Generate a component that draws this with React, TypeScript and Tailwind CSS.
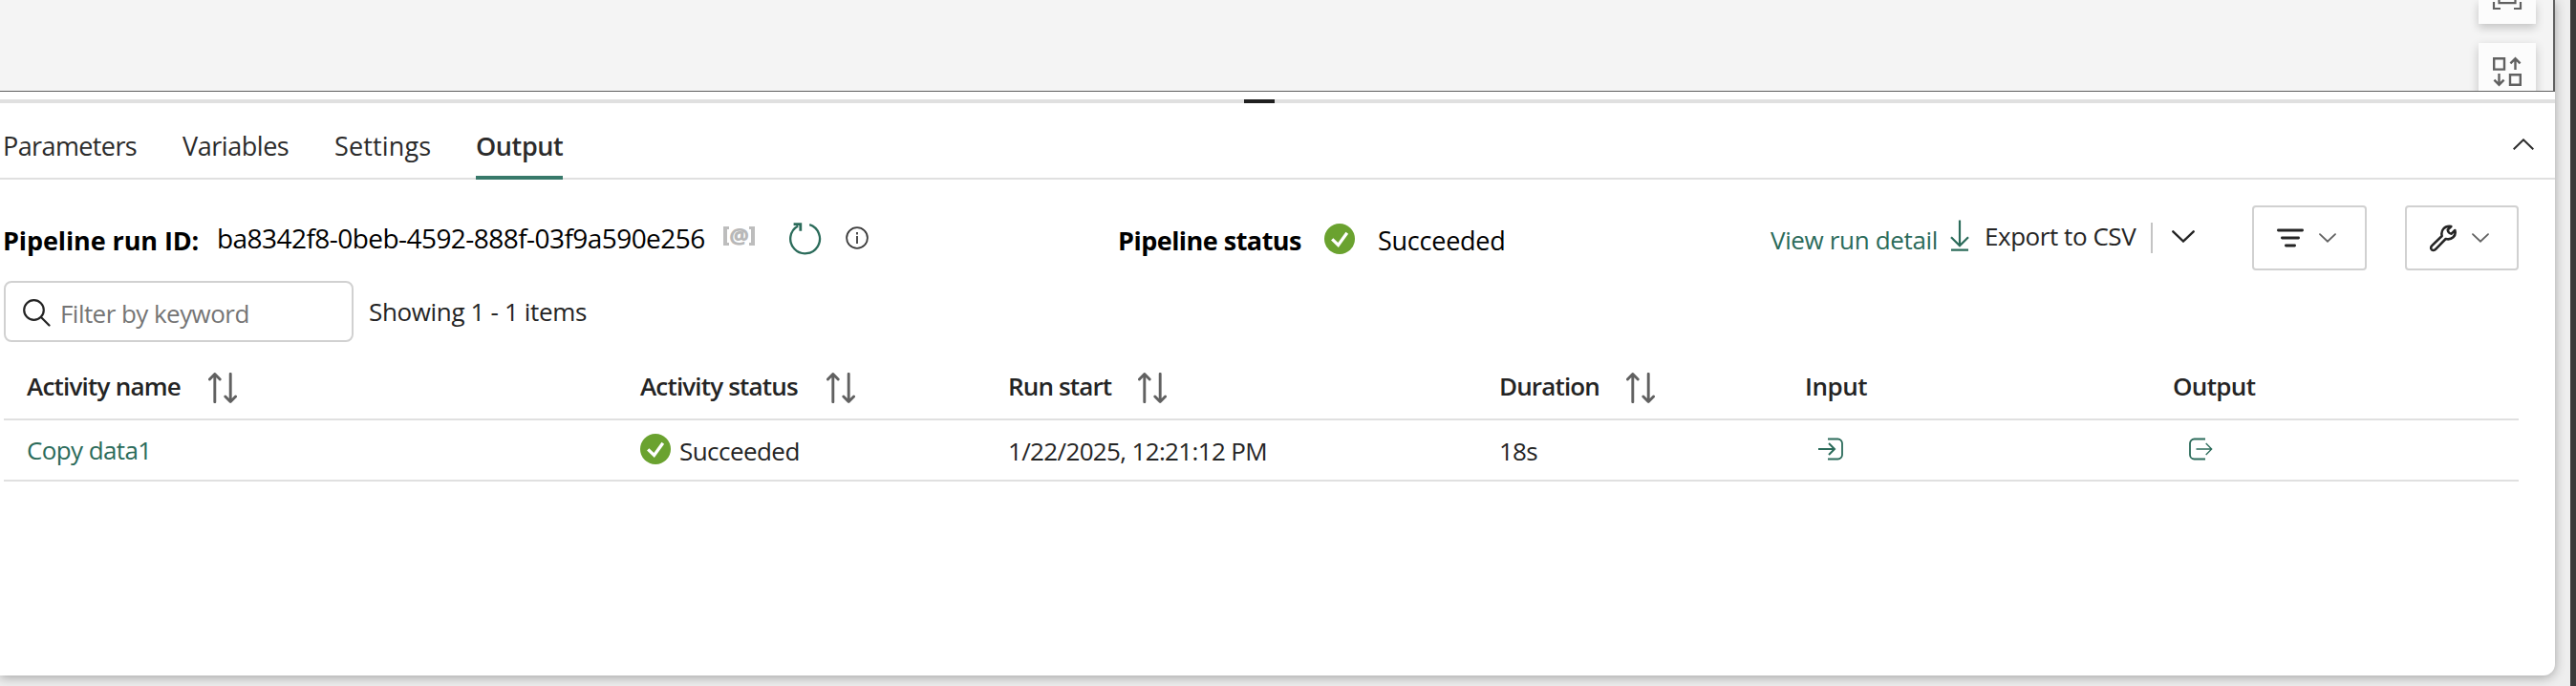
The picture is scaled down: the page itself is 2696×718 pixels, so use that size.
import type { ReactNode } from "react";

function ChevronDown({ className, strokeWidth = 2 }: { className: string; strokeWidth?: number }) {
  return (
    <svg viewBox="0 0 24 13" className={className} fill="none" stroke="currentColor" strokeWidth={strokeWidth} strokeLinecap="round" strokeLinejoin="miter">
      <path d="M1.3 1.3 12 11.5 22.7 1.3" />
    </svg>
  );
}

function SortIcon() {
  return (
    <svg viewBox="0 0 30 32" className="mt-4 h-8 w-[30px] shrink-0" fill="none" stroke="#616161" strokeWidth="2.9" strokeLinecap="round" strokeLinejoin="round">
      <path d="M6.8 30.7V1.6M1.4 7 6.8 1.5 12.2 7" />
      <path d="M23.2 1.3v29.1M17.8 25l5.4 5.5 5.4-5.5" />
    </svg>
  );
}

function SuccessIcon() {
  return (
    <svg viewBox="0 0 32 32" className="h-8 w-8 shrink-0">
      <circle cx="16" cy="16" r="16" fill="#6aa22f" />
      <path d="M8.2 16.4 14.6 22.4 23.8 9.8" fill="none" stroke="#fff" strokeWidth="3.3" />
    </svg>
  );
}

function CanvasTools() {
  return (
    <div className="flex w-[60px] shrink-0 flex-col gap-5">
      <div className="h-[25px] w-[60px] bg-[#fcfcfc] shadow-[0_4px_10px_rgba(0,0,0,0.2)]">
        <svg viewBox="0 0 60 25" className="h-[25px] w-[60px]" fill="none" stroke="#616161" strokeWidth="2.2">
          <path d="M16 2v7h7M44 2v7h-7M21.5 0v3.2h17V0" />
        </svg>
      </div>
      <div className="h-[60px] w-[60px] shrink-0 bg-[#fcfcfc] shadow-[0_4px_10px_rgba(0,0,0,0.2)]">
        <svg viewBox="0 0 60 60" className="h-[60px] w-[60px]" fill="none" stroke="#616161" strokeWidth="2.4">
          <path d="M16.2 16.2h10.8v11.4H16.2zM33 33.2h10.8v10.6H33z" />
          <path d="M38.5 28V16.5M33.4 21.4l5.1-5.1 5.1 5.1M21.5 32v11.6M16.4 38.6l5.1 5.1 5.1-5.1" />
        </svg>
      </div>
    </div>
  );
}

function Tab({ className, children }: { className: string; children: ReactNode }) {
  return <div className={`h-[80px] shrink-0 pt-[29px] text-[27px] leading-8 text-[#2b2b2b] ${className}`}>{children}</div>;
}

function HeaderCell({ label, labelClass, sortable }: { label: string; labelClass: string; sortable?: boolean }) {
  return (
    <div className="flex pl-6">
      <span className={`shrink-0 pt-[14px] text-[26px] leading-8 font-semibold text-[#242424] ${labelClass}`}>{label}</span>
      {sortable && <SortIcon />}
    </div>
  );
}

const columns = "grid grid-cols-[642px_385px_514px_320px_385px_386px]";

export default function App() {
  return (
    <div className="flex h-[718px] w-[2696px] overflow-hidden bg-[#eeeeee] whitespace-nowrap [font-family:'Open_Sans','Noto_Sans',sans-serif]">
      <div className="h-[707px] w-[2674px] shrink-0 overflow-hidden rounded-br-[12px] bg-white shadow-[0_2px_12px_rgba(0,0,0,0.32)]">
        <div className="flex h-[96px] justify-end overflow-hidden border-r-2 border-b border-[#616161] bg-[#f4f4f4] pr-[18px]">
          <CanvasTools />
        </div>

        <div className="mt-2 flex h-1 justify-center bg-[#e0e0e0]">
          <div className="mr-[38px] h-1 w-8 bg-[#1f1f1f]" />
        </div>

        <div className="flex h-[80px] border-b-2 border-[#e0e0e0]">
          <Tab className="ml-[3px] w-[188px] tracking-[-0.6px]">Parameters</Tab>
          <Tab className="w-[159px] tracking-[-0.45px]">Variables</Tab>
          <Tab className="w-[148px] tracking-[0.15px]">Settings</Tab>
          <Tab className="w-[91px] border-b-4 border-[#38796a] font-semibold tracking-[-0.4px]">Output</Tab>
          <svg viewBox="0 0 22 12" className="mt-[37px] mr-[22px] ml-auto h-3 w-[22px]" fill="none" stroke="#2b2b2b" strokeWidth="2">
            <path d="M0.7 11.3 11 1.3 21.3 11.3" />
          </svg>
        </div>

        <div className="flex h-[106px] items-start text-black">
          <div className="mt-12 ml-[3px] w-[224px] shrink-0 text-[27px] leading-8 font-bold tracking-[-0.1px]">Pipeline run ID:</div>
          <div className="mt-[45px] w-[530px] shrink-0 text-[28px] leading-8 tracking-[-0.55px]">ba8342f8-0beb-4592-888f-03f9a590e256</div>
          <div className="mt-[49px] flex h-5 w-[33px] shrink-0 items-center justify-between text-[#b8b8b8]">
            <span className="h-5 w-[6px] shrink-0 border-y-[3px] border-l-[4px] border-[#bdbdbd]" />
            <span className="w-[21px] shrink-0 text-center text-[23px] leading-5 font-extrabold [transform:translateY(-1px)]">@</span>
            <span className="h-5 w-[6px] shrink-0 border-y-[3px] border-r-[4px] border-[#bdbdbd]" />
          </div>
          <svg viewBox="0 0 34 34" className="mt-[45px] ml-9 h-[34px] w-[34px] shrink-0" fill="none" stroke="#2b6b5a" strokeWidth="2.3">
            <path d="M21.2 2.2A15.4 15.4 0 1 1 9.2 3.4" />
            <path d="M4.6 1.6h7.2v7.2" strokeWidth="2.8" />
          </svg>
          <svg viewBox="0 0 24 24" className="mt-[49px] ml-[25px] h-6 w-6 shrink-0" fill="none" stroke="#3b3b3b" strokeWidth="1.8">
            <circle cx="12" cy="12" r="10.9" />
            <path d="M12 10v8M12 6v2.4" />
          </svg>
          <div className="mt-12 ml-[261px] w-[216px] shrink-0 text-[27px] leading-8 font-bold tracking-[-0.52px]">Pipeline status</div>
          <div className="mt-[46px]"><SuccessIcon /></div>
          <div className="mt-12 ml-6 w-[411px] shrink-0 text-[27px] leading-8 tracking-[-0.25px]">Succeeded</div>
          <div className="mt-[47px] w-[188px] shrink-0 text-[26px] leading-8 tracking-[-0.35px] text-[#2b6b5a]">View run detail</div>
          <svg viewBox="0 0 20 33" className="mt-[42px] h-[33px] w-5 shrink-0" fill="none" stroke="#2b6b5a" strokeWidth="2.2">
            <path d="M10 .5v27M1 18.2l9 9 9-9M1 31.7h18" />
          </svg>
          <div className="mt-[43px] ml-[16px] w-[174px] shrink-0 text-[26px] leading-8 tracking-[-0.45px] text-[#242424]">Export to CSV</div>
          <div className="mt-[45px] h-8 w-[2px] shrink-0 bg-[#c4c4c4]" />
          <ChevronDown className="mt-[53px] ml-5 h-[13px] w-6 shrink-0 text-[#242424]" strokeWidth={2.4} />
          <div className="mt-[27px] ml-[60px] flex h-[68px] w-[120px] shrink-0 items-center rounded-[4px] border-2 border-[#d1d1d1] pl-6">
            <svg viewBox="0 0 28 20" className="h-5 w-7" stroke="#242424" strokeWidth="2.8" strokeLinecap="round">
              <path d="M1.4 2h25.2M5.400 10h17.200M9.400 18h9.200" />
            </svg>
            <ChevronDown className="ml-4 h-[10px] w-[18px] text-[#616161]" strokeWidth={2.4} />
          </div>
          <div className="mt-[27px] ml-10 flex h-[68px] w-[119px] shrink-0 items-center rounded-[4px] border-2 border-[#d1d1d1] pl-[23px]">
            <svg viewBox="66 30 90 90" className="h-[30px] w-[30px]" fill="none" stroke="#242424" strokeWidth="7.6" strokeLinejoin="round">
              <path d="M75 100 107 69C103 52 114 36 136 39L125 50C126 56 130 61 137 62L148 51C153 68 138 83 119 78L88 110C83 116 75 115 73 109 72 105 73 102 75 100Z" />
            </svg>
            <ChevronDown className="ml-[15px] h-[10px] w-[18px] text-[#616161]" strokeWidth={2.4} />
          </div>
        </div>

        <div className="ml-1 flex h-[80px] items-start">
          <div className="flex h-16 w-[366px] shrink-0 items-start rounded-[8px] border-2 border-[#d1d1d1]">
            <svg viewBox="0 0 29 29" className="mt-[17px] ml-[18px] h-[29px] w-[29px] shrink-0" fill="none" stroke="#242424" strokeWidth="2.2" strokeLinecap="round">
              <circle cx="11.5" cy="11.5" r="10.3" />
              <path d="M19 19l8.5 8.5" />
            </svg>
            <span className="mt-[16px] ml-[10px] text-[26px] leading-8 tracking-[-0.55px] text-[#757575]">Filter by keyword</span>
          </div>
          <span className="mt-[16px] ml-4 text-[26px] leading-8 tracking-[-0.35px] text-[#242424]">Showing 1 - 1 items</span>
        </div>

        <div className="ml-1 w-[2632px]">
          <div className={`${columns} h-[66px] border-b-2 border-[#e0e0e0]`}>
            <HeaderCell label="Activity name" labelClass="w-[190px] tracking-[-0.78px]" sortable />
            <HeaderCell label="Activity status" labelClass="w-[195px] tracking-[-0.83px]" sortable />
            <HeaderCell label="Run start" labelClass="w-[136px] tracking-[-0.85px]" sortable />
            <HeaderCell label="Duration" labelClass="w-[133px] tracking-[-0.85px]" sortable />
            <HeaderCell label="Input" labelClass="tracking-[-0.5px]" />
            <HeaderCell label="Output" labelClass="tracking-[-0.65px]" />
          </div>
          <div className={`${columns} h-16 border-b-2 border-[#e0e0e0] text-[26px] leading-8 text-[#242424]`}>
            <span className="pt-[15px] pl-6 tracking-[-0.6px] text-[#2b6b5a]">Copy data1</span>
            <div className="flex pt-[14px] pl-6">
              <SuccessIcon />
              <span className="mt-[2px] ml-[9px] tracking-[-0.55px]">Succeeded</span>
            </div>
            <span className="pt-[16px] pl-6 tracking-[-0.65px]">1/22/2025, 12:21:12 PM</span>
            <span className="pt-[16px] pl-6 tracking-[-0.8px]">18s</span>
            <svg viewBox="0 0 26 24" className="mt-[18px] ml-[38px] h-6 w-[26px]" fill="none" stroke="#2b6b5a" strokeWidth="2">
              <path d="M10 1.5h10.5a4.5 4.5 0 0 1 4.5 4.5v12a4.5 4.5 0 0 1-4.5 4.5H10" strokeWidth="1.8" />
              <path d="M0 12h17M11 6l6 6-6 6" />
            </svg>
            <svg viewBox="0 0 25 24" className="mt-[18px] ml-[41px] h-6 w-[25px]" fill="none" stroke="#2b6b5a" strokeWidth="1.3">
              <path d="M17 1.5H5.5a4.5 4.5 0 0 0-4.5 4.5v12a4.5 4.5 0 0 0 4.5 4.5H17" strokeWidth="1.8" />
              <path d="M7.5 12h16M17.7 6l6 6-6 6" />
            </svg>
          </div>
        </div>
      </div>
      <div className="ml-4 w-[6px] shrink-0 bg-[#3a3b3b]" />
    </div>
  );
}
